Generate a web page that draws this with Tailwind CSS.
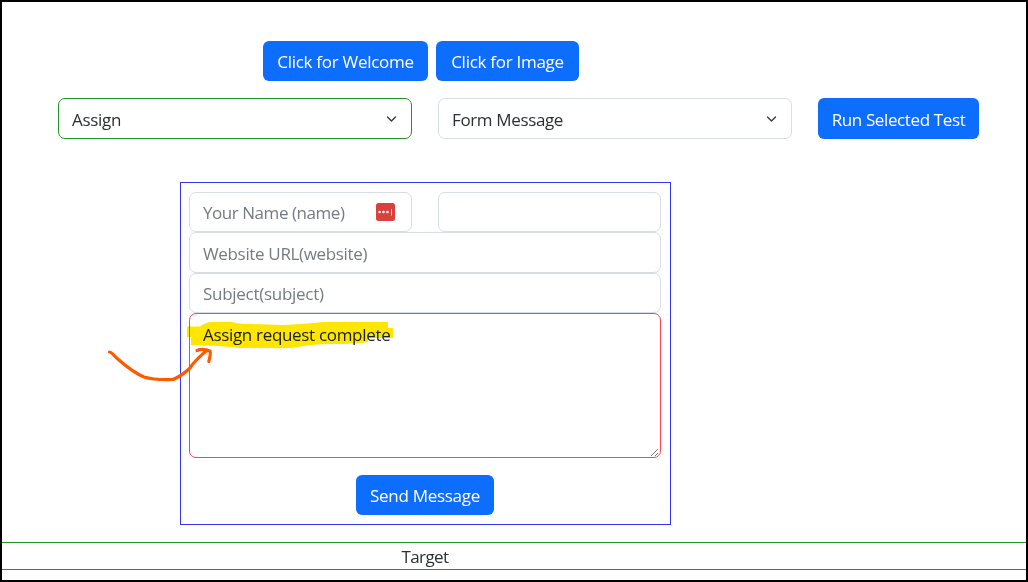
<!DOCTYPE html>
<html lang="en">
<head>
<meta charset="utf-8">
<title>Message test</title>
<script src="https://cdn.jsdelivr.net/npm/@tailwindcss/browser@4"></script>
</head>
<body class="bg-white">
<main class="relative flex h-[582px] w-[1028px] flex-col overflow-hidden border-2 border-black font-['Segoe_UI','Open_Sans',sans-serif] text-[17px] leading-[26px] tracking-[-0.28px] text-[#2b3035]">
  <div class="ml-[261px] mt-[39px] flex gap-2 text-white">
    <button class="h-10 w-[165px] whitespace-nowrap rounded-md bg-[#0d6efd] pt-0.5">Click for Welcome</button>
    <button class="h-10 w-[143px] whitespace-nowrap rounded-md bg-[#0d6efd] pt-0.5">Click for Image</button>
  </div>
  <div class="ml-14 mt-[17px] flex gap-[26px]">
    <div class="flex h-[41px] w-[354px] items-center justify-between rounded-[7px] border border-[#259225] pl-[13px] pr-[14px] pt-0.5">
      <span>Assign</span>
      <svg class="mb-0.5 h-3 w-3" viewBox="0 0 12 12" fill="none" stroke="#343a40" stroke-width="1.4" stroke-linecap="round" stroke-linejoin="round"><path d="M2.500 4l4 4 4-4"/></svg>
    </div>
    <div class="flex h-[41px] w-[354px] items-center justify-between rounded-[7px] border border-[#d8dde2] pl-[13px] pr-[14px] pt-0.5">
      <span class="tracking-[-0.36px]">Form Message</span>
      <svg class="mb-0.5 h-3 w-3" viewBox="0 0 12 12" fill="none" stroke="#343a40" stroke-width="1.4" stroke-linecap="round" stroke-linejoin="round"><path d="M2.500 4l4 4 4-4"/></svg>
    </div>
    <button class="h-[41px] w-[161px] whitespace-nowrap rounded-md bg-[#0d6efd] pt-[3px] tracking-[-0.38px] text-white">Run Selected Test</button>
  </div>
  <form class="ml-[178px] mt-[43px] flex h-[343px] w-[491px] flex-col border border-[#3434f0] pl-2 pr-[9px] pt-[9px] text-[#747b82]">
    <div class="flex justify-between">
      <div class="flex h-10 w-[223px] items-center justify-between rounded-[7px] border border-[#d8dde2] pl-[13px] pr-4">
        <span class="pt-0.5 tracking-[-0.45px]">Your Name (name)</span>
        <svg class="h-[18px] w-[19px]" viewBox="0 0 19 18"><rect width="19" height="18" rx="2.5" fill="#d9413d"/><g fill="#fff"><circle cx="3.6" cy="9" r="1.3"/><circle cx="7.5" cy="9" r="1.3"/><circle cx="11.4" cy="9" r="1.3"/><rect x="15" y="6" width="1" height="6.5" opacity=".8"/></g></svg>
      </div>
      <div class="h-10 w-[223px] rounded-[7px] border border-[#d8dde2]"></div>
    </div>
    <div class="flex h-[41px] items-center rounded-[7px] border border-[#d8dde2] pl-[13px] pt-0.5 tracking-[-0.34px]">Website URL(website)</div>
    <div class="flex h-10 items-center rounded-[7px] border border-[#d8dde2] pl-[13px] pt-0.5">Subject(subject)</div>
    <div class="relative h-[145px] rounded-[7px] border border-[#fa4848] pl-[13px] pt-2 tracking-[-0.32px] text-[#212529]">Assign request complete
      <svg class="absolute bottom-0 right-0 h-2.5 w-2.5" viewBox="0 0 10 10" stroke="#777" stroke-width="1"><path d="M1 9l7-7M5 9l3-3"/></svg>
    </div>
    <button type="button" class="ml-[167px] mt-[17px] h-10 w-[138px] whitespace-nowrap rounded-md bg-[#0d6efd] pt-0.5 text-white">Send Message</button>
  </form>
  <footer class="mt-[17px] flex h-7 shrink-0 justify-center border-y border-[#259225] pr-[178px] pt-px tracking-[-0.6px]">Target</footer>
  <svg class="pointer-events-none absolute -left-0.5 -top-0.5 h-[582px] w-[1028px] mix-blend-multiply" viewBox="0 0 1028 582" fill="none">
    <path fill="#ffe600" d="M187 326.500H200Q206 322 212 322L232 322Q239 324 251 324L282 325Q305 324 323 322L388 322V328H393V338H368V342Q355 344 333 344Q315 344 304 346Q290 349 272 348H239Q231 347 218 346L191 345V337H187Z"/>
  </svg>
  <svg class="pointer-events-none absolute -left-0.5 -top-0.5 h-[582px] w-[1028px]" viewBox="0 0 1028 582" fill="none" stroke="#ff5a00" stroke-width="3.200" stroke-linecap="round" stroke-linejoin="round">
    <path d="M109.500 352C112 352 114 356 119 360C128 368 137 374 144 377C152 379.500 160 380 173 379.500C181 376 187 371 190 368C195 360 203 354 207 350M197 350.500C201 348.500 206 349.500 210 351C211 353 210 357 208.800 361.500"/>
  </svg>
</main>
</body>
</html>
